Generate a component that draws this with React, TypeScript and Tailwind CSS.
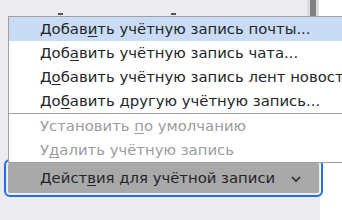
import React from "react";

const font = { fontFamily: '"DejaVu Sans", "Noto Sans", sans-serif' };

function U({ children }: { children: React.ReactNode }) {
  return <span className="underline underline-offset-[2px]">{children}</span>;
}

function Item({
  children,
  active,
  disabled,
}: {
  children: React.ReactNode;
  active?: boolean;
  disabled?: boolean;
}) {
  return (
    <div
      className={`h-[24px] flex items-center pl-[31px] whitespace-nowrap text-[14.85px] ${
        active ? "bg-[#cadcf5]" : ""
      } ${disabled ? "text-[#9c9c9c]" : "text-[#232629]"}`}
    >
      <span>{children}</span>
    </div>
  );
}

export default function App() {
  return (
    <div
      className="relative w-[342px] h-[220px] overflow-hidden bg-white flex"
      style={font}
    >
      <div className="w-[320px] h-full bg-[#ececf0] flex flex-col">
        <div className="h-[155px] flex">
          <div className="flex-1 flex items-start pt-[13px]">
            <div className="ml-[58px] w-[5px] h-[2px] bg-[#555]" />
            <div className="ml-[108px] w-[5px] h-[2px] bg-[#555]" />
          </div>
          <div className="w-[12px] h-full bg-[#dcdce0] px-[3px]">
            <div className="w-full h-[60px] bg-[#808080]" />
          </div>
          <div className="w-[1px] h-full bg-white" />
        </div>
        <button
          className="ml-[8px] mt-[8px] w-[311px] h-[30px] bg-[#a9a9a9] rounded-[2px] outline-2 outline-offset-2 outline-[#1d6fe5] flex items-center pl-[32px] pr-[18px] text-[14.85px] text-[#232629]"
          style={font}
        >
          <span className="flex-1 text-left whitespace-nowrap">
            Дейст<U>в</U>ия для учётной записи
          </span>
          <svg width="10" height="6" viewBox="0 0 10 6" className="mt-[1px]">
            <path
              d="M1 1 L5 5 L9 1"
              fill="none"
              stroke="#232629"
              strokeWidth="1.6"
            />
          </svg>
        </button>
      </div>

      <div className="absolute left-[8px] top-[16px] w-[360px] bg-white border border-[#a0a0a0]">
        <Item active>
          Добав<U>и</U>ть учётную запись почты...
        </Item>
        <Item>
          Доб<U>а</U>вить учётную запись чата...
        </Item>
        <Item>
          Д<U>о</U>бавить учётную запись лент новостей...
        </Item>
        <Item>
          До<U>б</U>авить другую учётную запись...
        </Item>
        <div className="h-[1px] bg-[#a0a0a0]" />
        <Item disabled>
          Установить <U>п</U>о умолчанию
        </Item>
        <Item disabled>
          У<U>д</U>алить учётную запись
        </Item>
      </div>
    </div>
  );
}
